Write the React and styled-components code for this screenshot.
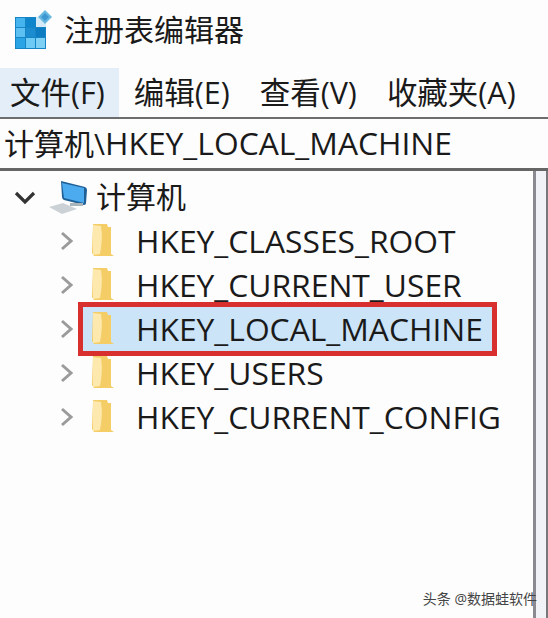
import React from "react";
import styled, { createGlobalStyle } from "styled-components";

const GlobalStyle = createGlobalStyle`
  html, body {
    margin: 0;
    background: #fdfdfd;
  }
`;

const FONT = `"Open Sans", "Noto Sans", "Noto Sans CJK SC", sans-serif`;

const keys = [
  { name: "HKEY_CLASSES_ROOT" },
  { name: "HKEY_CURRENT_USER" },
  { name: "HKEY_LOCAL_MACHINE", selected: true },
  { name: "HKEY_USERS" },
  { name: "HKEY_CURRENT_CONFIG" },
];

function RegeditIcon() {
  return (
    <svg width="40" height="40" viewBox="0 0 40 40">
      <path d="M2 7 H23 V17 H33 V39 H2 Z" fill="#1585c6" />
      <rect x="23" y="7" width="10" height="10" fill="#d5ebf7" />
      <rect x="3" y="8" width="9" height="9" fill="#45b4ee" />
      <rect x="13" y="8" width="9" height="9" fill="#0f86cc" />
      <rect x="3" y="18" width="9" height="9" fill="#5cc0f2" />
      <rect x="13" y="18" width="9" height="9" fill="#1b8cd0" />
      <rect x="23" y="18" width="9" height="9" fill="#0e7cc0" />
      <rect x="3" y="28" width="9" height="10" fill="#2aa4e4" />
      <rect x="13" y="28" width="9" height="10" fill="#6dcaf4" />
      <rect x="23" y="28" width="9" height="10" fill="#7fd0f5" />
      <path d="M32 0 L39 7 L32 14 L25 7 Z" fill="#68b8e2" />
      <path d="M32 3 L36 7 L32 11 L28 7 Z" fill="#3d97d0" />
    </svg>
  );
}

function ComputerIcon() {
  return (
    <svg width="40" height="36" viewBox="0 0 40 36">
      <path d="M13 1 L37 7 Q39 8 39 10 L38 23 Q38 25 36 25 L16 20 Q14 19 14 17 Z" fill="#1f5f96" />
      <path d="M14 3 L36 8 L36 23 L16 18 Z" fill="#4cabee" />
      <rect x="22" y="23" width="13" height="3" fill="#aab4bb" />
      <path d="M1 27 L15 23 L29 29 L14 34 Z" fill="#ccd1d5" />
    </svg>
  );
}

function FolderIcon() {
  return (
    <svg width="24" height="36" viewBox="0 0 24 36">
      <path d="M2 1 L16 1 L17 4 L20 4 L20 31 L23 33 L3 33 L1 30 Z" fill="#f4cd66" />
      <path d="M2 2 L10 3 Q12 16 9 31 L2 32 Z" fill="#fde9ad" />
    </svg>
  );
}

function Chevron({ open }) {
  return open ? (
    <svg width="22" height="14" viewBox="0 0 22 14" fill="none">
      <path d="M2 2 L11 11 L20 2" stroke="#333333" strokeWidth="3.2" />
    </svg>
  ) : (
    <svg width="18" height="20" viewBox="0 0 18 20" fill="none">
      <path d="M4 2 L13 10 L4 18" stroke="#9b9b9b" strokeWidth="3" />
    </svg>
  );
}

export default function App() {
  return (
    <>
      <GlobalStyle />
      <Page>
        <TitleBar>
          <RegeditIcon />
          <Title>注册表编辑器</Title>
        </TitleBar>
        <MenuBar>
          <MenuItem $active>文件(F)</MenuItem>
          <MenuItem>编辑(E)</MenuItem>
          <MenuItem>查看(V)</MenuItem>
          <MenuItem>收藏夹(A)</MenuItem>
        </MenuBar>
        <AddressBar>
          <AddressRoot>计算机\</AddressRoot>HKEY_LOCAL_MACHINE
        </AddressBar>
        <Content>
          <TreePane>
            <RootRow>
              <Chevron open />
              <ComputerIcon />
              <RootLabel>计算机</RootLabel>
            </RootRow>
            {keys.map((key) => (
              <KeyRow key={key.name}>
                <Chevron />
                <KeyBody $selected={key.selected}>
                  <FolderIcon />
                  <KeyLabel>{key.name}</KeyLabel>
                </KeyBody>
              </KeyRow>
            ))}
          </TreePane>
          <ScrollStrip />
        </Content>
        <Watermark>头条 @数据蛙软件</Watermark>
      </Page>
    </>
  );
}

const Page = styled.div`
  width: 548px;
  height: 618px;
  position: relative;
  overflow: hidden;
  display: flex;
  flex-direction: column;
  background: #fdfdfd;
  color: #1a1a1a;
  font-family: ${FONT};
`;

const TitleBar = styled.div`
  height: 68px;
  box-sizing: border-box;
  padding: 0 0 8px 13px;
  display: flex;
  align-items: center;
  gap: 11px;
`;

const Title = styled.div`
  font-size: 30px;
  line-height: 40px;
`;

const MenuBar = styled.div`
  height: 49px;
  flex-shrink: 0;
  display: flex;
  border-bottom: 2px solid #6d6d6d;
`;

const MenuItem = styled.div`
  padding: ${({ $active }) => ($active ? "0 14px 3px 10px" : "0 15px 3px")};
  display: flex;
  align-items: center;
  font-size: 30.5px;
  background: ${({ $active }) => ($active ? "#e3eef8" : "transparent")};
`;

const AddressBar = styled.div`
  height: 52px;
  flex-shrink: 0;
  box-sizing: border-box;
  padding: 0 0 3px 4px;
  display: flex;
  align-items: center;
  font-size: 31.8px;
  border-bottom: 3px solid #666666;
`;

const AddressRoot = styled.span`
  font-size: 30px;
`;

const Content = styled.div`
  flex: 1;
  display: flex;
  min-height: 0;
`;

const TreePane = styled.div`
  flex: 1;
  padding: 5px 0 0 14px;
  display: flex;
  flex-direction: column;
  border-right: 3px solid #8a8a90;
`;

const ScrollStrip = styled.div`
  width: 10px;
  flex-shrink: 0;
  background: #f1f1f8;
  border-right: 2px solid #77777c;
`;

const RootRow = styled.div`
  height: 43px;
  display: flex;
  align-items: center;
  gap: 12px;
`;

const RootLabel = styled.span`
  font-size: 30px;
  margin: 0 0 6px -4px;
`;

const KeyRow = styled.div`
  height: 44px;
  padding-left: 44px;
  display: flex;
  align-items: center;
  gap: 7px;
`;

const KeyBody = styled.div`
  height: 44px;
  box-sizing: border-box;
  display: flex;
  align-items: center;
  gap: 21px;
  padding: 0 9px 0 8px;
  background: ${({ $selected }) => ($selected ? "#cce4f7" : "transparent")};
  outline: ${({ $selected }) => ($selected ? "5px solid #d8302f" : "none")};
`;

const KeyLabel = styled.span`
  font-size: 31.8px;
  margin-bottom: 2px;
`;

const Watermark = styled.div`
  position: absolute;
  right: 11px;
  bottom: 10px;
  font-size: 14px;
  color: #444444;
`;
